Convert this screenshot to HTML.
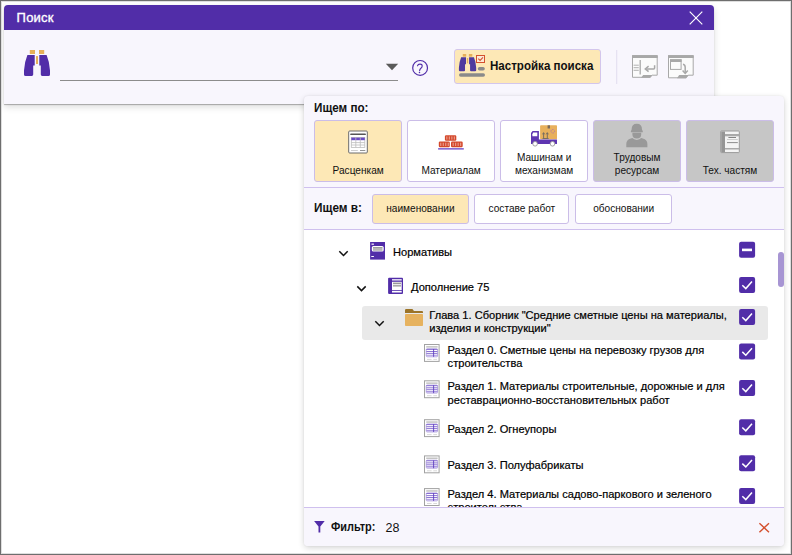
<!DOCTYPE html>
<html><head><meta charset="utf-8">
<style>
*{box-sizing:border-box;margin:0;padding:0}
html,body{width:792px;height:555px;overflow:hidden;background:#fff}
body{position:relative;font-family:"Liberation Sans",sans-serif;color:#1a1a1a}
.a{position:absolute}
#frame{left:0;top:0;width:792px;height:555px;border:1px solid #6e6e6e;box-shadow:inset 1px 1px 0 #dedede, inset -1px -1px 0 #dedede;z-index:50;pointer-events:none}
#win{left:4px;top:5px;width:710px;height:99px;background:#f8f6fd;border-radius:4px 4px 0 0;box-shadow:0 1px 1px rgba(0,0,0,.28),0 3px 7px rgba(0,0,0,.14)}
#title{left:0;top:0;width:710px;height:25px;background:#512da8;border-radius:4px 4px 0 0}
#title span{position:absolute;left:12.6px;top:5px;color:#fff;font-size:13px;font-weight:normal;-webkit-text-stroke:0.35px #fff;letter-spacing:0.2px;line-height:16px}
#panel{left:304px;top:96px;width:480px;height:449.5px;background:#f8f6fd;border-radius:4px;box-shadow:0 2px 6px rgba(0,0,0,.16),0 0 2px rgba(0,0,0,.08);overflow:hidden}
.lbl{font-weight:bold;font-size:12.5px;color:#111;line-height:14px;transform-origin:0 0;white-space:nowrap}
.card{width:87.5px;height:62px;border:1px solid #cbbde8;border-radius:3px;background:#fff}
.card.sel{background:#fde8b6}
.card.dis{background:#c6c6c6}
.ct{position:absolute;left:0;right:0;text-align:center;font-size:10.1px;line-height:13px;color:#111}
.btn{height:30px;border:1px solid #cbbde8;border-radius:3px;background:#fff;font-size:10.1px;line-height:28px;text-align:center;color:#111}
.btn.sel{background:#fde8b6}
.tr{font-size:11.1px;line-height:13.5px;color:#000;white-space:nowrap;-webkit-text-stroke:0.2px #000}
.cb{width:16px;height:16px;background:#512da8;border-radius:2px}
</style></head><body>
<div id="frame" class="a"></div>

<div id="win" class="a">
  <div id="title" class="a"><span>Поиск</span>
    <svg class="a" style="left:685px;top:5.5px" width="14" height="14" viewBox="0 0 14 14"><path d="M0.7 0.7L13.3 13.3M13.3 0.7L0.7 13.3" stroke="#fff" stroke-width="1.15" fill="none"/></svg>
  </div>
</div>


<svg class="a" style="left:0;top:0" width="792" height="110" viewBox="0 0 792 110">
  <!-- binoculars -->
  <rect x="29.8" y="50" width="5.2" height="4" fill="#e6b05a"/>
  <rect x="39" y="50" width="5.2" height="4" fill="#e6b05a"/>
  <rect x="36" y="56.1" width="2" height="7.9" fill="#e6b05a"/>
  <path d="M27.4 55H34.7V65.6H33.2V74.6Q33.2 76 31.8 76H25.6Q24 76 24 74.4V70.5Q24.6 61.5 27.4 55Z" fill="#512da8"/>
  <path d="M46.6 55H39.3V65.6H40.8V74.6Q40.8 76 42.2 76H48.4Q50 76 50 74.4V70.5Q49.4 61.5 46.6 55Z" fill="#512da8"/>
  <!-- input underline -->
  <rect x="60" y="80" width="338" height="1" fill="#8c8c8c"/>
  <path d="M385.8 63.8H398.2L392 70.2Z" fill="#5a5a5a"/>
  <!-- help -->
  <circle cx="420.1" cy="67.9" r="7.4" fill="none" stroke="#512da8" stroke-width="1.2"/>
  <path d="M417.5 65.8Q417.9 64.1 420 64.1Q422.2 64.1 422.2 66Q422.2 67.2 420.9 68.2Q419.7 69.1 419.6 70.6" fill="none" stroke="#512da8" stroke-width="1.1" stroke-linecap="round"/>
  <circle cx="419.5" cy="72.5" r="0.75" fill="#512da8"/>
  <!-- separator -->
  <rect x="616.2" y="50" width="1" height="34" fill="#e2dcef"/>
  <!-- window icon 1 -->
  <g fill="none" stroke="#a8a8a8">
    <path d="M632.5 55.7H657.2V75.2H652.2L650 77.3H632.5Z" fill="#fbfbfb" stroke-width="1"/>
    <rect x="632" y="55.2" width="25.7" height="2.8" fill="#a8a8a8" stroke="none"/>
    <path d="M640.2 60.1V74.4" stroke-width="1.3"/>
    <path d="M633.6 65.2H638.8M633.6 67.7H638.8M633.6 70.3H638.8" stroke-width="0.9"/>
    <path d="M654.6 65.3V67.9Q654.6 68.9 653.6 68.9H646.2" stroke-width="1.5"/>
    <path d="M648.6 66.2L645.3 68.9L648.6 71.6" stroke-width="1.5"/>
  </g>
  <path d="M641 77.8L643.2 75H652.4L650.2 77.8Z" fill="#a8a8a8"/>
  <!-- window icon 2 -->
  <g fill="none" stroke="#a8a8a8">
    <path d="M668.5 55.7H693.2V75.2H688.2L686 77.8H668.5Z" fill="#fbfbfb" stroke-width="1"/>
    <rect x="668" y="55.2" width="25.7" height="2.8" fill="#a8a8a8" stroke="none"/>
    <rect x="670.5" y="59.8" width="10.6" height="9.6" stroke-width="1"/>
    <path d="M683 64.2Q685.2 64.6 685.2 67.2V73" stroke-width="1.5"/>
    <path d="M682.6 70.6L685.2 73.4L687.8 70.6" stroke-width="1.5"/>
  </g>
  <rect x="670" y="59.3" width="11.6" height="2.7" fill="#a8a8a8"/>
  <path d="M677 78.3L679.2 75H688.4L686.2 78.3Z" fill="#a8a8a8"/>
</svg>
<div class="a" style="left:453.5px;top:48.5px;width:147.5px;height:35px;background:#fde8b6;border:1px solid #d3c6ec;border-radius:3px"></div>
<svg class="a" style="left:0;top:0" width="792" height="110" viewBox="0 0 792 110">
  <g transform="translate(442.94 20.75) scale(0.665)">
  <rect x="29.8" y="50" width="5.2" height="4" fill="#e6b05a"/>
  <rect x="39" y="50" width="5.2" height="4" fill="#e6b05a"/>
  <rect x="36" y="56.1" width="2" height="7.9" fill="#e6b05a"/>
  <path d="M27.4 55H34.7V65.6H33.2V74.6Q33.2 76 31.8 76H25.6Q24 76 24 74.4V70.5Q24.6 61.5 27.4 55Z" fill="#4e3a9f"/>
  <path d="M46.6 55H39.3V65.6H40.8V74.6Q40.8 76 42.2 76H48.4Q50 76 50 74.4V70.5Q49.4 61.5 46.6 55Z" fill="#4e3a9f"/>
</g>
  <rect x="476.5" y="55.5" width="8" height="7" fill="#fbe9d6" stroke="#d4502e" stroke-width="1"/>
  <path d="M478.3 58.6L480.1 60.4L483 57.4" fill="none" stroke="#d4502e" stroke-width="1.1"/>
  <rect x="477.8" y="67" width="7" height="3.5" rx="1.75" fill="#8a8a8a"/>
  <rect x="459" y="73.3" width="26" height="3.5" rx="1.75" fill="#8a8a8a"/>
</svg>
<div class="a lbl" style="left:490.4px;top:58.7px;transform:scaleX(0.925)">Настройка поиска</div>


<div id="panel" class="a"></div>
<div class="a" style="left:304px;top:187px;width:480px;height:1px;background:#cfc0ee"></div>
<div class="a" style="left:304px;top:229px;width:480px;height:1px;background:#cfc0ee"></div>
<div class="a" style="left:304px;top:230px;width:480px;height:277px;background:#fff"></div>
<div class="a lbl" style="left:314px;top:100.9px;transform:scaleX(0.933)">Ищем по:</div>
<div class="a card sel" style="left:314.4px;top:120.2px"><div class="ct" style="top:43px">Расценкам</div></div>
<div class="a card" style="left:407.4px;top:120.2px"><div class="ct" style="top:43px">Материалам</div></div>
<div class="a card" style="left:500.4px;top:120.2px"><div class="ct" style="top:30px">Машинам и<br>механизмам</div></div>
<div class="a card dis" style="left:593.3px;top:120.2px"><div class="ct" style="top:30px">Трудовым<br>ресурсам</div></div>
<div class="a card dis" style="left:686.2px;top:120.2px"><div class="ct" style="top:43px">Тех. частям</div></div>
<div class="a lbl" style="left:314px;top:201px;transform:scaleX(0.943)">Ищем в:</div>
<div class="a btn sel" style="left:372.2px;top:193.5px;width:96.5px">наименовании</div>
<div class="a btn" style="left:474.4px;top:193.5px;width:95px">составе работ</div>
<div class="a btn" style="left:575.3px;top:193.5px;width:96.7px">обосновании</div>
<div class="a" style="left:361.8px;top:305.8px;width:406.2px;height:33.8px;background:#e9e9e9;border-radius:3px"></div>
<div class="a tr" style="left:393px;top:245.80px">Нормативы</div>
<div class="a tr" style="left:411px;top:281.10px">Дополнение 75</div>
<div class="a tr" style="left:429.3px;top:308.70px">Глава 1. Сборник "Средние сметные цены на материалы,<br>изделия и конструкции"</div>
<div class="a tr" style="left:447.6px;top:343.90px">Раздел 0. Сметные цены на перевозку грузов для<br>строительства</div>
<div class="a tr" style="left:447.6px;top:380.40px">Раздел 1. Материалы строительные, дорожные и для<br>реставрационно-восстановительных работ</div>
<div class="a tr" style="left:447.6px;top:422.70px">Раздел 2. Огнеупоры</div>
<div class="a tr" style="left:447.6px;top:458.60px">Раздел 3. Полуфабрикаты</div>
<div class="a tr" style="left:447.6px;top:487.70px">Раздел 4. Материалы садово-паркового и зеленого<br>строительства</div>
<svg class="a" style="left:0;top:0" width="792" height="555" viewBox="0 0 792 555">
<rect x="739.1" y="241.8" width="16" height="16" rx="2" fill="#512da8"/>
<rect x="742" y="248.60000000000002" width="10" height="2.6" fill="#fff"/>
<rect x="739.1" y="277" width="16" height="16" rx="2" fill="#512da8"/>
<path d="M742.3 285.3L745.8 288.6L752 281.6" fill="none" stroke="#fff" stroke-width="1.5"/>
<rect x="739.1" y="309" width="16" height="16" rx="2" fill="#512da8"/>
<path d="M742.3 317.3L745.8 320.6L752 313.6" fill="none" stroke="#fff" stroke-width="1.5"/>
<rect x="739.1" y="343.6" width="16" height="16" rx="2" fill="#512da8"/>
<path d="M742.3 351.90000000000003L745.8 355.20000000000005L752 348.20000000000005" fill="none" stroke="#fff" stroke-width="1.5"/>
<rect x="739.1" y="380" width="16" height="16" rx="2" fill="#512da8"/>
<path d="M742.3 388.3L745.8 391.6L752 384.6" fill="none" stroke="#fff" stroke-width="1.5"/>
<rect x="739.1" y="419.2" width="16" height="16" rx="2" fill="#512da8"/>
<path d="M742.3 427.5L745.8 430.8L752 423.8" fill="none" stroke="#fff" stroke-width="1.5"/>
<rect x="739.1" y="455.3" width="16" height="16" rx="2" fill="#512da8"/>
<path d="M742.3 463.6L745.8 466.90000000000003L752 459.90000000000003" fill="none" stroke="#fff" stroke-width="1.5"/>
<rect x="739.1" y="488" width="16" height="16" rx="2" fill="#512da8"/>
<path d="M742.3 496.3L745.8 499.6L752 492.6" fill="none" stroke="#fff" stroke-width="1.5"/>
<path d="M339.3 251.3L343.5 255.5L347.7 251.3" fill="none" stroke="#111" stroke-width="1.5"/>
<path d="M357.3 286.40000000000003L361.5 290.6L365.7 286.40000000000003" fill="none" stroke="#111" stroke-width="1.5"/>
<path d="M375.3 321.3L379.5 325.5L383.7 321.3" fill="none" stroke="#111" stroke-width="1.5"/>
<rect x="778" y="252" width="6" height="35" rx="3" fill="#a795d3"/>
</svg>
<svg class="a" style="left:0;top:0" width="792" height="555" viewBox="0 0 792 555">
<!-- doc table (card1) -->
<rect x="348.7" y="131" width="18.6" height="22" rx="1" fill="#fff" stroke="#6a6a6a" stroke-width="1"/>
<rect x="350.2" y="133.6" width="15.7" height="1.5" rx="0.7" fill="#555"/>
<rect x="351.3" y="137.4" width="13.5" height="10" fill="#fff" stroke="#bdbdbd" stroke-width="0.8"/>
<rect x="351.3" y="137.6" width="13.5" height="2.6" fill="#6a4bc4"/>
<path d="M351.3 142.6H364.8M351.3 145H364.8M355.8 137.4V147.4M360.3 137.4V147.4" stroke="#bdbdbd" stroke-width="0.8"/>
<path d="M351 150.5H357.8" stroke="#c8c8c8" stroke-width="0.9"/>
<path d="M360 150.5H365.3" stroke="#888" stroke-width="0.9"/>
<!-- bricks -->
<g fill="#d4472a">
<rect x="444.9" y="135.2" width="11.4" height="5.5" rx="1.2"/>
<rect x="438.8" y="141.5" width="11" height="5.7" rx="1.2"/>
<rect x="451" y="141.5" width="11.7" height="5.7" rx="1.2"/>
</g>
<g fill="#eaa08f">
<rect x="446.3" y="136.4" width="1.1" height="3.2"/><rect x="448.8" y="136.4" width="1.1" height="3.2"/><rect x="451.3" y="136.4" width="1.1" height="3.2"/><rect x="453.8" y="136.4" width="1.1" height="3.2"/>
<rect x="440.2" y="142.7" width="1.1" height="3.3"/><rect x="442.7" y="142.7" width="1.1" height="3.3"/><rect x="445.2" y="142.7" width="1.1" height="3.3"/><rect x="447.7" y="142.7" width="1.1" height="3.3"/>
<rect x="452.6" y="142.7" width="1.1" height="3.3"/><rect x="455.1" y="142.7" width="1.1" height="3.3"/><rect x="457.6" y="142.7" width="1.1" height="3.3"/><rect x="460.1" y="142.7" width="1.1" height="3.3"/>
</g>
<rect x="438.1" y="148.1" width="25.7" height="1.5" fill="#7b5ccc"/>
<!-- truck -->
<rect x="540.1" y="125.3" width="16.9" height="13.9" rx="0.8" fill="#e8b05c"/>
<rect x="547.6" y="125.3" width="2.4" height="3.2" fill="#7a6a5a"/>
<path d="M543.6 138V133.2M542.6 134.3L543.6 132.6L544.6 134.3M547.3 138V133.2M546.3 134.3L547.3 132.6L548.3 134.3M542.6 138.5H548.6" stroke="#6d6560" stroke-width="0.9" fill="none"/>
<circle cx="552.8" cy="131.3" r="1.8" fill="none" stroke="#a46ab8" stroke-width="0.8" stroke-dasharray="0.8 0.6"/>
<path d="M532.6 131.1H538.9V139.4H557V144H531V133Z" fill="#5e35b1"/>
<path d="M533.2 132.6H537.3V136.2H532.4V134.2Z" fill="#fff"/>
<circle cx="535.1" cy="143.8" r="2.3" fill="#fff" stroke="#9a9a9a" stroke-width="0.9"/>
<circle cx="552.5" cy="143.8" r="2.3" fill="#fff" stroke="#9a9a9a" stroke-width="0.9"/>
<!-- person -->
<g fill="#999">
<path d="M630.9 132.2V131Q631.5 130.6 631.6 129.6Q631.6 123.8 636.8 123.8Q642 123.8 642 129.6Q642.1 130.6 642.8 131V132.2Z"/>
<path d="M632.4 132.8H641.2V134.5Q641.2 138.6 636.8 138.6Q632.4 138.6 632.4 134.5Z"/>
<path d="M626.3 147.3V144Q626.3 139.5 630.8 138.4L632.4 138.1Q633.8 139.9 636.8 139.9Q639.8 139.9 641.2 138.1L642.8 138.4Q647.4 139.5 647.4 144V147.3Z"/>
</g>
<!-- book gray -->
<rect x="720.7" y="131" width="18.6" height="21.6" rx="0.8" fill="#f4f4f4" stroke="#9a9a9a" stroke-width="1"/>
<rect x="721.2" y="131.5" width="3.8" height="20.6" fill="#959595"/>
<rect x="725" y="134" width="14" height="2.3" fill="#a9a9a9"/>
<rect x="725" y="148" width="14" height="1.5" fill="#a9a9a9"/>
<rect x="728.4" y="137.1" width="7.6" height="0.9" fill="#777"/>
<rect x="727" y="139" width="10.8" height="0.8" fill="#c4c4c4"/>
<rect x="727" y="142.1" width="10.8" height="1" fill="#8d8d8d"/>
<!-- tree: normativy -->
<rect x="370.1" y="242" width="14.9" height="17.6" fill="#512da8"/>
<rect x="371.8" y="246.1" width="11.9" height="5.4" rx="1.5" fill="#fff"/>
<rect x="373" y="247.2" width="9.5" height="1.4" fill="#888"/>
<rect x="373" y="249.3" width="9.5" height="1.3" fill="#999"/>
<rect x="371.5" y="243.5" width="2.4" height="1.4" fill="#fff" opacity=".85"/>
<rect x="371.3" y="256" width="2.6" height="1" fill="#fff"/>
<!-- tree: dopolnenie (book purple) -->
<rect x="388.1" y="277.7" width="14.9" height="16.2" rx="1" fill="#512da8"/>
<rect x="392" y="279.2" width="9.7" height="1.3" fill="#fff"/>
<rect x="392" y="281.8" width="9.7" height="8.4" fill="#fff"/>
<rect x="393" y="282.6" width="8" height="1.6" fill="#999"/>
<rect x="393" y="285" width="8" height="1.6" fill="#aaa"/>
<rect x="392" y="291" width="9.7" height="1.5" fill="#fff"/>
<g transform="translate(0 0.0)">
<rect x="424.5" y="344.5" width="14.6" height="16.9" fill="#fff" stroke="#a2a2a2" stroke-width="1"/>
<rect x="426.2" y="346.1" width="11.4" height="1.5" fill="#c4c4c4"/>
<rect x="426.2" y="348.8" width="11.4" height="8" rx="1" fill="#fff" stroke="#9d8ad8" stroke-width="0.7"/>
<path d="M426.4 349.4H437.4M426.4 351.5H437.4M426.4 353.4H437.4M426.4 355.3H437.4" stroke="#7052c8" stroke-width="0.8"/>
<rect x="426.3" y="355.3" width="11.2" height="1.5" fill="#c9bdec"/>
<path d="M433.6 349V356.8" stroke="#5e3fbf" stroke-width="0.9"/>
<path d="M427 359.4H431.6M433.3 359.4H437" stroke="#c8c8c8" stroke-width="0.7"/>
</g>
<g transform="translate(0 36.3)">
<rect x="424.5" y="344.5" width="14.6" height="16.9" fill="#fff" stroke="#a2a2a2" stroke-width="1"/>
<rect x="426.2" y="346.1" width="11.4" height="1.5" fill="#c4c4c4"/>
<rect x="426.2" y="348.8" width="11.4" height="8" rx="1" fill="#fff" stroke="#9d8ad8" stroke-width="0.7"/>
<path d="M426.4 349.4H437.4M426.4 351.5H437.4M426.4 353.4H437.4M426.4 355.3H437.4" stroke="#7052c8" stroke-width="0.8"/>
<rect x="426.3" y="355.3" width="11.2" height="1.5" fill="#c9bdec"/>
<path d="M433.6 349V356.8" stroke="#5e3fbf" stroke-width="0.9"/>
<path d="M427 359.4H431.6M433.3 359.4H437" stroke="#c8c8c8" stroke-width="0.7"/>
</g>
<g transform="translate(0 75.2)">
<rect x="424.5" y="344.5" width="14.6" height="16.9" fill="#fff" stroke="#a2a2a2" stroke-width="1"/>
<rect x="426.2" y="346.1" width="11.4" height="1.5" fill="#c4c4c4"/>
<rect x="426.2" y="348.8" width="11.4" height="8" rx="1" fill="#fff" stroke="#9d8ad8" stroke-width="0.7"/>
<path d="M426.4 349.4H437.4M426.4 351.5H437.4M426.4 353.4H437.4M426.4 355.3H437.4" stroke="#7052c8" stroke-width="0.8"/>
<rect x="426.3" y="355.3" width="11.2" height="1.5" fill="#c9bdec"/>
<path d="M433.6 349V356.8" stroke="#5e3fbf" stroke-width="0.9"/>
<path d="M427 359.4H431.6M433.3 359.4H437" stroke="#c8c8c8" stroke-width="0.7"/>
</g>
<g transform="translate(0 111.4)">
<rect x="424.5" y="344.5" width="14.6" height="16.9" fill="#fff" stroke="#a2a2a2" stroke-width="1"/>
<rect x="426.2" y="346.1" width="11.4" height="1.5" fill="#c4c4c4"/>
<rect x="426.2" y="348.8" width="11.4" height="8" rx="1" fill="#fff" stroke="#9d8ad8" stroke-width="0.7"/>
<path d="M426.4 349.4H437.4M426.4 351.5H437.4M426.4 353.4H437.4M426.4 355.3H437.4" stroke="#7052c8" stroke-width="0.8"/>
<rect x="426.3" y="355.3" width="11.2" height="1.5" fill="#c9bdec"/>
<path d="M433.6 349V356.8" stroke="#5e3fbf" stroke-width="0.9"/>
<path d="M427 359.4H431.6M433.3 359.4H437" stroke="#c8c8c8" stroke-width="0.7"/>
</g>
<g transform="translate(0 144.1)">
<rect x="424.5" y="344.5" width="14.6" height="16.9" fill="#fff" stroke="#a2a2a2" stroke-width="1"/>
<rect x="426.2" y="346.1" width="11.4" height="1.5" fill="#c4c4c4"/>
<rect x="426.2" y="348.8" width="11.4" height="8" rx="1" fill="#fff" stroke="#9d8ad8" stroke-width="0.7"/>
<path d="M426.4 349.4H437.4M426.4 351.5H437.4M426.4 353.4H437.4M426.4 355.3H437.4" stroke="#7052c8" stroke-width="0.8"/>
<rect x="426.3" y="355.3" width="11.2" height="1.5" fill="#c9bdec"/>
<path d="M433.6 349V356.8" stroke="#5e3fbf" stroke-width="0.9"/>
<path d="M427 359.4H431.6M433.3 359.4H437" stroke="#c8c8c8" stroke-width="0.7"/>
</g>
<!-- folder -->
<path d="M405 313V310.2Q405 309.1 406.1 309.1H412.4L414 310.9H422Q423 310.9 423 311.9V313Z" fill="#9c7428"/>
<rect x="405" y="313.9" width="18" height="12.1" rx="0.8" fill="#e6b25f"/>
</svg>
<div class="a" style="left:304px;top:507px;width:480px;height:38.5px;background:#f8f6fd;border-top:1px solid #cfc0ee;border-radius:0 0 4px 4px"></div>
<svg class="a" style="left:0;top:0" width="792" height="555" viewBox="0 0 792 555">
<path d="M314.1 521.1H324.7L320.3 526.6V532.5H318.5V526.6Z" fill="#512da8"/>
<path d="M759.4 523.3L769 532.2M769 523.3L759.4 532.2" stroke="#d4502e" stroke-width="1.4" fill="none"/>
</svg>
<div class="a lbl" style="left:330.5px;top:519.5px;font-size:12px;transform:scaleX(0.91)">Фильтр:</div>
<div class="a" style="left:385.6px;top:521px;font-size:12.5px;line-height:15px;color:#111">28</div>


</body></html>
